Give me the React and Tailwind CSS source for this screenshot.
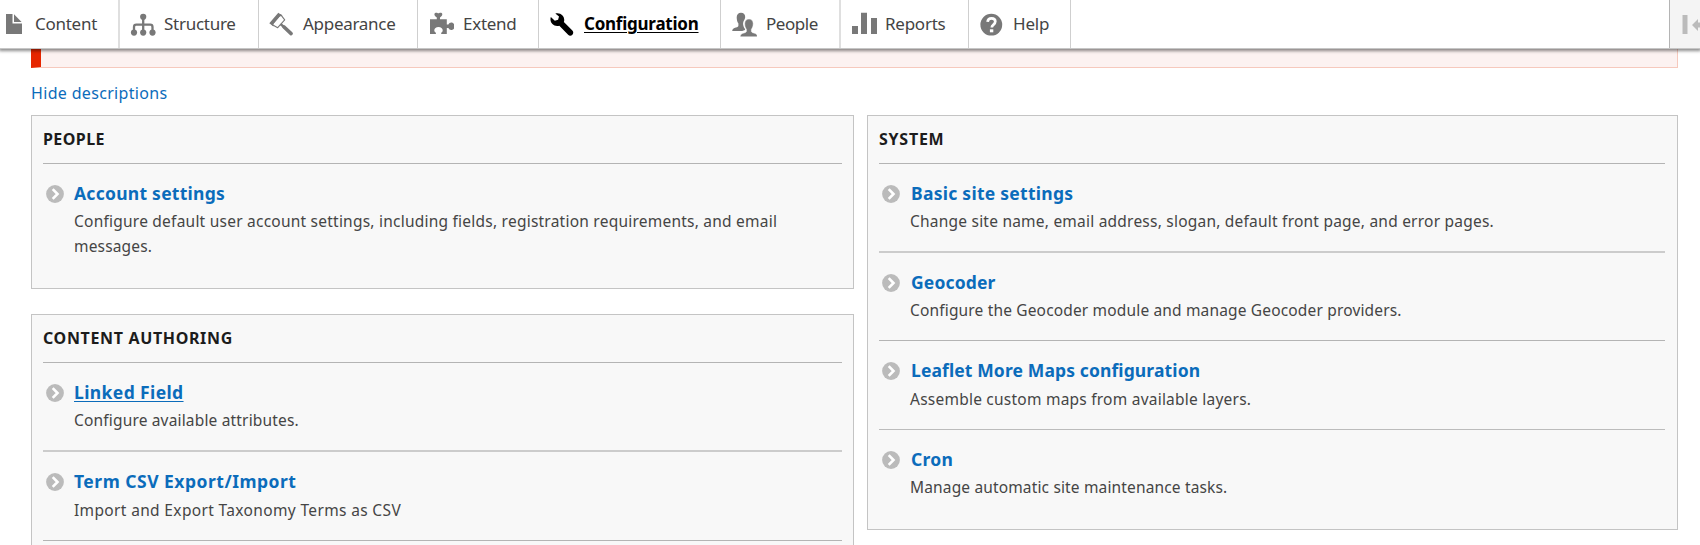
import React from "react";

const iconBox = "w-[26px] h-[26px] shrink-0 block";

const FileIcon = () => (
  <svg viewBox="0 0 26 26" className={iconBox} fill="#787878">
    <path d="M6 2h6.5v9.5H22V22H6z" />
    <path d="M14 2.2L21.6 10H14z" />
  </svg>
);

const StructureIcon = () => (
  <svg viewBox="0 0 26 26" className={iconBox} fill="#787878">
    <circle cx="13.2" cy="4.8" r="3.1" />
    <circle cx="4" cy="20.6" r="3.1" />
    <circle cx="13.2" cy="20.6" r="3.1" />
    <circle cx="22.5" cy="20.6" r="3.1" />
    <path d="M4 20v-5q0-2.3 2.3-2.3h13.9q2.3 0 2.3 2.3v5M13.2 5v15" fill="none" stroke="#787878" strokeWidth="2.3" />
  </svg>
);

const AppearanceIcon = () => (
  <svg viewBox="0 0 26 26" className={iconBox}>
    <path d="M3 12.600L11.700 2.600l4 5.200-7 7.900z" fill="#fff" stroke="#787878" strokeWidth="1.100" strokeLinejoin="round" />
    <path d="M.3 11.300L9.300.7l4.200 3.100-3 .8-6.200 7.300.200 2.600z" fill="#787878" />
    <path d="M11.500 12l4.200 3.600" stroke="#787878" strokeWidth="2.400" />
    <path d="M14.800 14.800l7.300 6.800" stroke="#787878" strokeWidth="3.600" strokeLinecap="round" />
  </svg>
);

const ExtendIcon = () => (
  <svg viewBox="0 0 26 26" className={iconBox} fill="#787878">
    <path d="M2 7.2h6.8V5.4C7.4 4.6 6.4 3.6 6.4 2.2 6.4.9 7.6.7 8.4.7c1 0 1.2.6 2 .6s1-.6 2-.6c.9 0 1.9.2 1.9 1.5 0 1.400-1 2.400-2.300 3.200v1.800H18.800v5.300h1.600c.6-1.300 1.500-2.100 2.900-2.100 1.800 0 3.300 1.700 3.300 3.900s-1.500 3.700-3.300 3.700c-1.400 0-2.300-.8-2.900-2h-1.600V22h-5.600v-1.300c1-.5 1.500-1.300 1.500-2.400 0-1.900-1.700-3.300-4.200-3.300s-4.200 1.400-4.200 3.300c0 1.100.6 1.900 1.600 2.400V22H2z" />
  </svg>
);

const WrenchIcon = () => (
  <svg viewBox="0 0 26 26" className={iconBox} fill="#000">
    <path transform="translate(1 .4) scale(1.5)" d="M14.916 12.086l-.01-.008-5.656-5.656c.15-.449.252-.921.252-1.421 0-2.485-2.016-4.5-4.502-4.5-.505 0-.981.102-1.434.255l2.431 2.031-.588 2.196-2.196.588-2.645-2.445c-.162.464-.268.956-.268 1.475 0 2.486 2.014 4.5 4.5 4.5.5 0 .972-.102 1.421-.251l5.867 6.065c.781.781 2.047.781 2.828 0s.781-2.047 0-2.829z" />
  </svg>
);

const PeopleIcon = () => (
  <svg viewBox="0 0 26 26" className={iconBox} fill="#787878">
    <path d="M10 .7c2.700 0 4.400 1.800 4.200 4.600-.1 1.100-.4 1.700-.8 2.500-1.200 1.700-1.500 3.600-1.200 5.200.2 1.500 1 3 1.900 4l-.1.900c-1 .3-1.800.7-2.800 1.200H1.200c0-2.300 1.500-3.100 3.700-3.700 1.700-.5 2.500-.9 2.500-2V11.500C6.200 9.900 5.700 7.800 5.700 5.300 5.700 2.500 7.400.7 10 .7z" />
    <path d="M18 7c2.600 0 4.200 1.800 4.200 4.500 0 2.300-.6 4.300-1.800 5.800v1.900c0 1 .9 1.400 2.300 1.800 2.300.600 3.700 1.400 3.700 3.800H9.200c0-2.400 1.400-3.200 3.700-3.800 1.500-.4 2.500-.8 2.500-1.800v-1.900c-1.200-1.500-1.700-3.500-1.700-5.800C13.700 8.800 15.400 7 18 7z" stroke="#fff" strokeWidth="0.5" />
  </svg>
);

const ReportsIcon = () => (
  <svg viewBox="0 0 26 26" className={iconBox} fill="#787878">
    <path d="M1 14h6v8H1zM10 .8h6V22h-6zM20 6h6v16h-6z" />
  </svg>
);

const HelpIcon = () => (
  <svg viewBox="0 0 26 26" className={iconBox}>
    <circle cx="12.300" cy="12.700" r="10.900" fill="#787878" />
    <path d="M8.600 9.900c.2-2.300 1.700-3.500 3.900-3.500s3.800 1.200 3.800 3.200c0 1.700-1 2.500-2 3.200-1 .7-1.500 1.200-1.500 2.600" fill="none" stroke="#fff" strokeWidth="2.700" />
    <path d="M10.900 17.300h3.400v3h-3.400z" fill="#fff" />
  </svg>
);

const ChevronBadge = () => (
  <svg viewBox="0 0 18 18" className="mt-[5px] ml-[3px] mr-[10px] block h-[18px] w-[18px] shrink-0">
    <circle cx="9" cy="9" r="8.900" fill="#bbbbbb" />
    <path d="M6.700 4.200L11.500 9l-4.800 4.800" fill="none" stroke="#fff" strokeWidth="2.600" />
  </svg>
);

const tabs = [
  { label: "Content", Icon: FileIcon, box: "w-[120px] border-[#dfdfdf] border-r-2", text: "ml-px tracking-[-0.27px]" },
  { label: "Structure", Icon: StructureIcon, box: "w-[139px] pl-[10px] border-[#cfcfcf] border-r", text: "tracking-[-0.27px]" },
  { label: "Appearance", Icon: AppearanceIcon, box: "w-[159px] pl-[10px] border-[#cfcfcf] border-r", text: "tracking-[-0.29px]" },
  { label: "Extend", Icon: ExtendIcon, box: "w-[121px] pl-[10px] border-[#cfcfcf] border-r", text: "ml-px tracking-[-0.27px]" },
  { label: "Configuration", Icon: WrenchIcon, box: "w-[182px] pl-[10px] border-[#cfcfcf] border-r", text: "ml-px tracking-[-0.24px] font-bold text-black underline decoration-1 underline-offset-2", active: true },
  { label: "People", Icon: PeopleIcon, box: "w-[120px] pl-[10px] border-[#dfdfdf] border-r-2", text: "ml-px tracking-[-0.45px]" },
  { label: "Reports", Icon: ReportsIcon, box: "w-[128px] pl-[10px] border-[#cfcfcf] border-r", text: "tracking-[-0.25px]" },
  { label: "Help", Icon: HelpIcon, box: "w-[102px] pl-[10px] border-[#cfcfcf] border-r", text: "tracking-[-0.2px]" },
];

const people = [
  {
    title: "Account settings", titleClass: "tracking-[0.26px]", box: "h-[123px]",
    lines: [
      ["Configure default user account settings, including fields, registration requirements, and email", "tracking-[0.23px]"],
      ["messages.", "tracking-[0.16px]"],
    ],
  },
];

const authoring = [
  { title: "Linked Field", titleClass: "tracking-[0.39px] underline decoration-1 underline-offset-2", box: "h-[89px] border-b-2 border-[#cccccc]", lines: [["Configure available attributes.", "tracking-[0.17px]"]] },
  { title: "Term CSV Export/Import", titleClass: "tracking-[0.5px]", box: "h-[89px] border-b border-[#b4b4b4]", low: true, lines: [["Import and Export Taxonomy Terms as CSV", "tracking-[0.35px]"]] },
];

const system = [
  { title: "Basic site settings", titleClass: "ml-px tracking-[0.27px]", box: "h-[89px] border-b-2 border-[#cccccc]", lines: [["Change site name, email address, slogan, default front page, and error pages.", "tracking-[0.22px]"]] },
  { title: "Geocoder", titleClass: "ml-px tracking-[0.14px]", box: "h-[88px] border-b border-[#b4b4b4]", lines: [["Configure the Geocoder module and manage Geocoder providers.", "tracking-[0.16px]"]] },
  { title: "Leaflet More Maps configuration", titleClass: "ml-px tracking-[0.12px]", box: "h-[89px] border-b border-[#bcbcbc]", low: true, lines: [["Assemble custom maps from available layers.", "tracking-[0.23px]"]] },
  { title: "Cron", titleClass: "ml-px tracking-[0.3px]", box: "h-[99px]", lines: [["Manage automatic site maintenance tasks.", "tracking-[0.15px]"]] },
];

function Panel({ heading, headingClass, items, className }) {
  return (
    <section className={`border border-[#c4c4c4] bg-[#f8f8f8] ${className}`}>
      <h3 className={`h-12 border-b border-[#b4b4b4] text-base leading-[47px] font-bold whitespace-nowrap text-[#1c1c1c] ${headingClass}`}>{heading}</h3>
      <ul>
        {items.map((item) => (
          <li key={item.title} className={`flex pt-4 ${item.box}`}>
            <ChevronBadge />
            <div className="whitespace-nowrap">
              <a className={`block w-fit text-[17.5px] leading-[27px] font-bold text-[#0b6cbb] ${item.titleClass}`}>{item.title}</a>
              <div className={`text-[15.5px] leading-[25px] text-[#454545] ${item.low ? "pt-[3px]" : "pt-[2px]"}`}>
                {item.lines.map(([text, cls]) => (
                  <p key={text} className={cls}>{text}</p>
                ))}
              </div>
            </div>
          </li>
        ))}
      </ul>
    </section>
  );
}

export default function App() {
  return (
    <div className="h-[545px] w-[1700px] overflow-hidden bg-white font-['Noto_Sans',sans-serif]">
      <nav className="relative z-10 flex h-[49px] border-b border-[#c6c6c6] bg-white shadow-[0_1px_3px_1px_rgba(0,0,0,0.45)]">
        {tabs.map(({ label, Icon, box, text, active }) => (
          <a key={label} className={`flex shrink-0 items-start gap-2 pt-3 ${box}`}>
            <Icon />
            <span className={`-mt-3 text-[17px] leading-[47px] ${active ? "" : "text-[#444444]"} ${text}`}>{label}</span>
          </a>
        ))}
        <div className="ml-auto flex w-[31px] items-start overflow-hidden border-l border-[#b4b4b4] bg-[#f4f4f4] pt-[15px] pl-3">
          <svg viewBox="0 0 26 20" className="h-5 w-[26px] shrink-0" fill="#bbbbbb">
            <path d="M.5 0h5v19h-5zM10 10l6-6v3.500h9v5h-9V16z" />
          </svg>
        </div>
      </nav>
      <main className="pl-[31px]">
        <div className="h-[19px] w-[1647px] border-r border-b border-l-[10px] border-[#f6c9bd] border-l-[#e62600] bg-[#fcf2f1]" />
        <a className="mt-[13px] block w-fit text-base leading-6 tracking-[0.33px] text-[#0b6cbb]">Hide descriptions</a>
        <div className="mt-[10px] flex items-start gap-[13px]">
          <div className="flex w-[823px] flex-col gap-[25px]">
            <Panel heading="PEOPLE" headingClass="tracking-[0.43px]" items={people} className="h-[174px] px-[11px]" />
            <Panel heading="CONTENT AUTHORING" headingClass="tracking-[0.65px]" items={authoring} className="h-[260px] px-[11px]" />
          </div>
          <Panel heading="SYSTEM" headingClass="tracking-[0.75px]" items={system} className="h-[415px] w-[811px] pr-3 pl-[11px]" />
        </div>
      </main>
    </div>
  );
}
